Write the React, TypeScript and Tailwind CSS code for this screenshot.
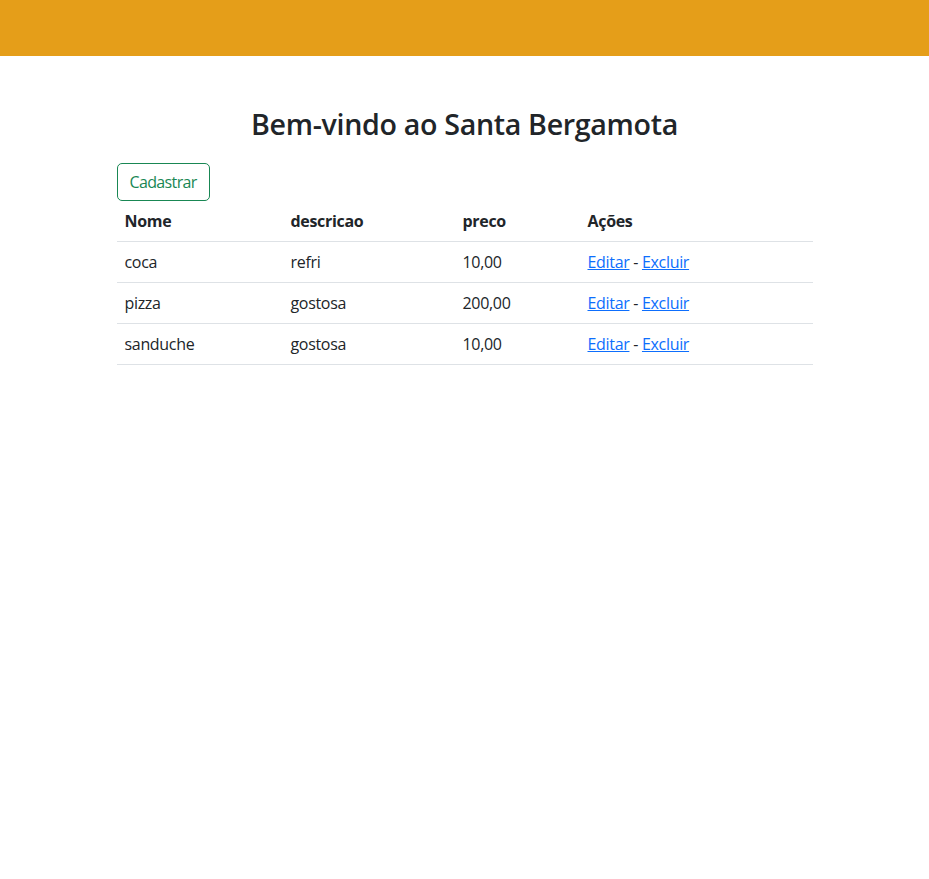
const produtos = [
  { nome: 'coca', descricao: 'refri', preco: '10,00' },
  { nome: 'pizza', descricao: 'gostosa', preco: '200,00' },
  { nome: 'sanduche', descricao: 'gostosa', preco: '10,00' },
];

export default function App() {
  return (
    <div className="min-h-screen bg-white text-[#212529] text-base font-['Open_Sans',sans-serif] tracking-[-0.02em]">
      <nav className="h-14 bg-[#e59e19]" />

      <main className="mx-auto w-[696px]">
        <h3 className="mt-[52px] mb-[23px] text-center text-[28.6px] font-semibold leading-[32px]">
          Bem-vindo ao Santa Bergamota
        </h3>

        <button className="h-[38px] rounded-[5px] border border-[#198754] px-3 tracking-[-0.04em] text-[#198754]">
          Cadastrar
        </button>

        <table className="w-full border-collapse text-left">
          <thead>
            <tr className="border-b border-[#dee2e6]">
              <th className="w-[166px] px-2 py-2 font-bold leading-6">Nome</th>
              <th className="w-[172px] px-2 py-2 font-bold leading-6">descricao</th>
              <th className="w-[125px] px-2 py-2 font-bold leading-6">preco</th>
              <th className="px-2 py-2 font-bold leading-6">Ações</th>
            </tr>
          </thead>
          <tbody>
            {produtos.map((p) => (
              <tr key={p.nome} className="border-b border-[#dee2e6]">
                <td className="px-2 py-2 leading-6">{p.nome}</td>
                <td className="px-2 py-2 leading-6">{p.descricao}</td>
                <td className="px-2 py-2 leading-6">{p.preco}</td>
                <td className="px-2 py-2 leading-6">
                  <a href="#" className="text-[#0d6efd] underline">Editar</a>
                  {' - '}
                  <a href="#" className="text-[#0d6efd] underline">Excluir</a>
                </td>
              </tr>
            ))}
          </tbody>
        </table>
      </main>
    </div>
  );
}
